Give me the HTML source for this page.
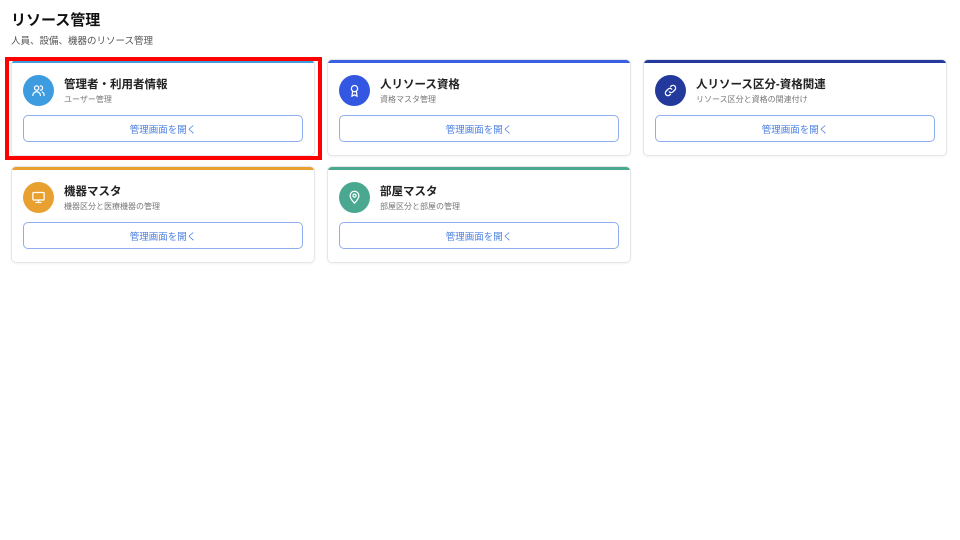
<!DOCTYPE html>
<html><head><meta charset="utf-8"><style>
*{box-sizing:border-box;margin:0;padding:0}
body{width:960px;height:540px;background:#fff;font-family:"Liberation Sans","Noto Sans CJK JP",sans-serif;position:relative;overflow:hidden;color:#222}
h1{position:absolute;left:11px;top:9px;font-size:15px;font-weight:bold;color:#111}
.sub{position:absolute;left:11px;top:33px;font-size:9.5px;color:#555}
.card{position:absolute;width:304px;height:97px;background:#fff;border:1px solid #e4e6ea;border-radius:5px;overflow:hidden;box-shadow:0 1px 2px rgba(0,0,0,.05)}
.card .bar{position:absolute;left:0;top:0;right:0;height:3px}
.ic{position:absolute;left:11px;top:15px;width:31px;height:31px;border-radius:50%;display:flex;align-items:center;justify-content:center}
.t{position:absolute;left:52px;top:16px;font-size:11.5px;font-weight:bold;color:#222}
.s{position:absolute;left:52px;top:34px;font-size:8px;color:#777}
.btn{position:absolute;left:11px;top:55px;width:280px;height:27px;border:1px solid #8eaef0;border-radius:5px;color:#4b7fe0;font-size:9.5px;display:flex;align-items:center;justify-content:center}
.red{position:absolute;left:5px;top:57px;width:317px;height:103px;border:4px solid #f00}
</style></head><body>
<h1>リソース管理</h1>
<div class="sub">人員、設備、機器のリソース管理</div>

<div class="card" style="left:11px;top:59px">
<div class="bar" style="background:#3d9be0"></div>
<div class="ic" style="background:#3d9be0"><svg width="15" height="15" viewBox="0 0 24 24" fill="none" stroke="#fff" stroke-width="2" stroke-linecap="round"><circle cx="9" cy="8" r="3.5"/><path d="M3 20c0-3.5 2.7-6 6-6s6 2.5 6 6"/><path d="M15 4.5a3.5 3.5 0 0 1 0 7"/><path d="M18 14.5c2 .8 3 2.8 3 5.5"/></svg></div>
<div class="t">管理者・利用者情報</div><div class="s">ユーザー管理</div>
<div class="btn">管理画面を開く</div></div>

<div class="card" style="left:327px;top:59px">
<div class="bar" style="background:#3a5fe0"></div>
<div class="ic" style="background:#3357e0"><svg width="15" height="15" viewBox="0 0 24 24" fill="none" stroke="#fff" stroke-width="2" stroke-linecap="round"><circle cx="12" cy="9" r="5"/><path d="M9 13l-1 8 4-2 4 2-1-8"/></svg></div>
<div class="t">人リソース資格</div><div class="s">資格マスタ管理</div>
<div class="btn">管理画面を開く</div></div>

<div class="card" style="left:643px;top:59px">
<div class="bar" style="background:#233a9c"></div>
<div class="ic" style="background:#233a9c"><svg width="15" height="15" viewBox="0 0 24 24" fill="none" stroke="#fff" stroke-width="2" stroke-linecap="round"><path d="M10 14a4 4 0 0 0 6 0l3-3a4 4 0 0 0-6-6l-1 1"/><path d="M14 10a4 4 0 0 0-6 0l-3 3a4 4 0 0 0 6 6l1-1"/></svg></div>
<div class="t">人リソース区分-資格関連</div><div class="s">リソース区分と資格の関連付け</div>
<div class="btn">管理画面を開く</div></div>

<div class="card" style="left:11px;top:166px">
<div class="bar" style="background:#e8a030"></div>
<div class="ic" style="background:#e8a030"><svg width="15" height="15" viewBox="0 0 24 24" fill="none" stroke="#fff" stroke-width="2" stroke-linecap="round"><rect x="3" y="4" width="18" height="12" rx="1.5"/><path d="M8 20h8M12 16v4"/></svg></div>
<div class="t">機器マスタ</div><div class="s">機器区分と医療機器の管理</div>
<div class="btn">管理画面を開く</div></div>

<div class="card" style="left:327px;top:166px">
<div class="bar" style="background:#4aa890"></div>
<div class="ic" style="background:#4aa890"><svg width="15" height="15" viewBox="0 0 24 24" fill="none" stroke="#fff" stroke-width="2" stroke-linecap="round"><path d="M12 21s-7-6.5-7-12a7 7 0 0 1 14 0c0 5.5-7 12-7 12z"/><circle cx="12" cy="9" r="2.5"/></svg></div>
<div class="t">部屋マスタ</div><div class="s">部屋区分と部屋の管理</div>
<div class="btn">管理画面を開く</div></div>

<div class="red"></div>
</body></html>
